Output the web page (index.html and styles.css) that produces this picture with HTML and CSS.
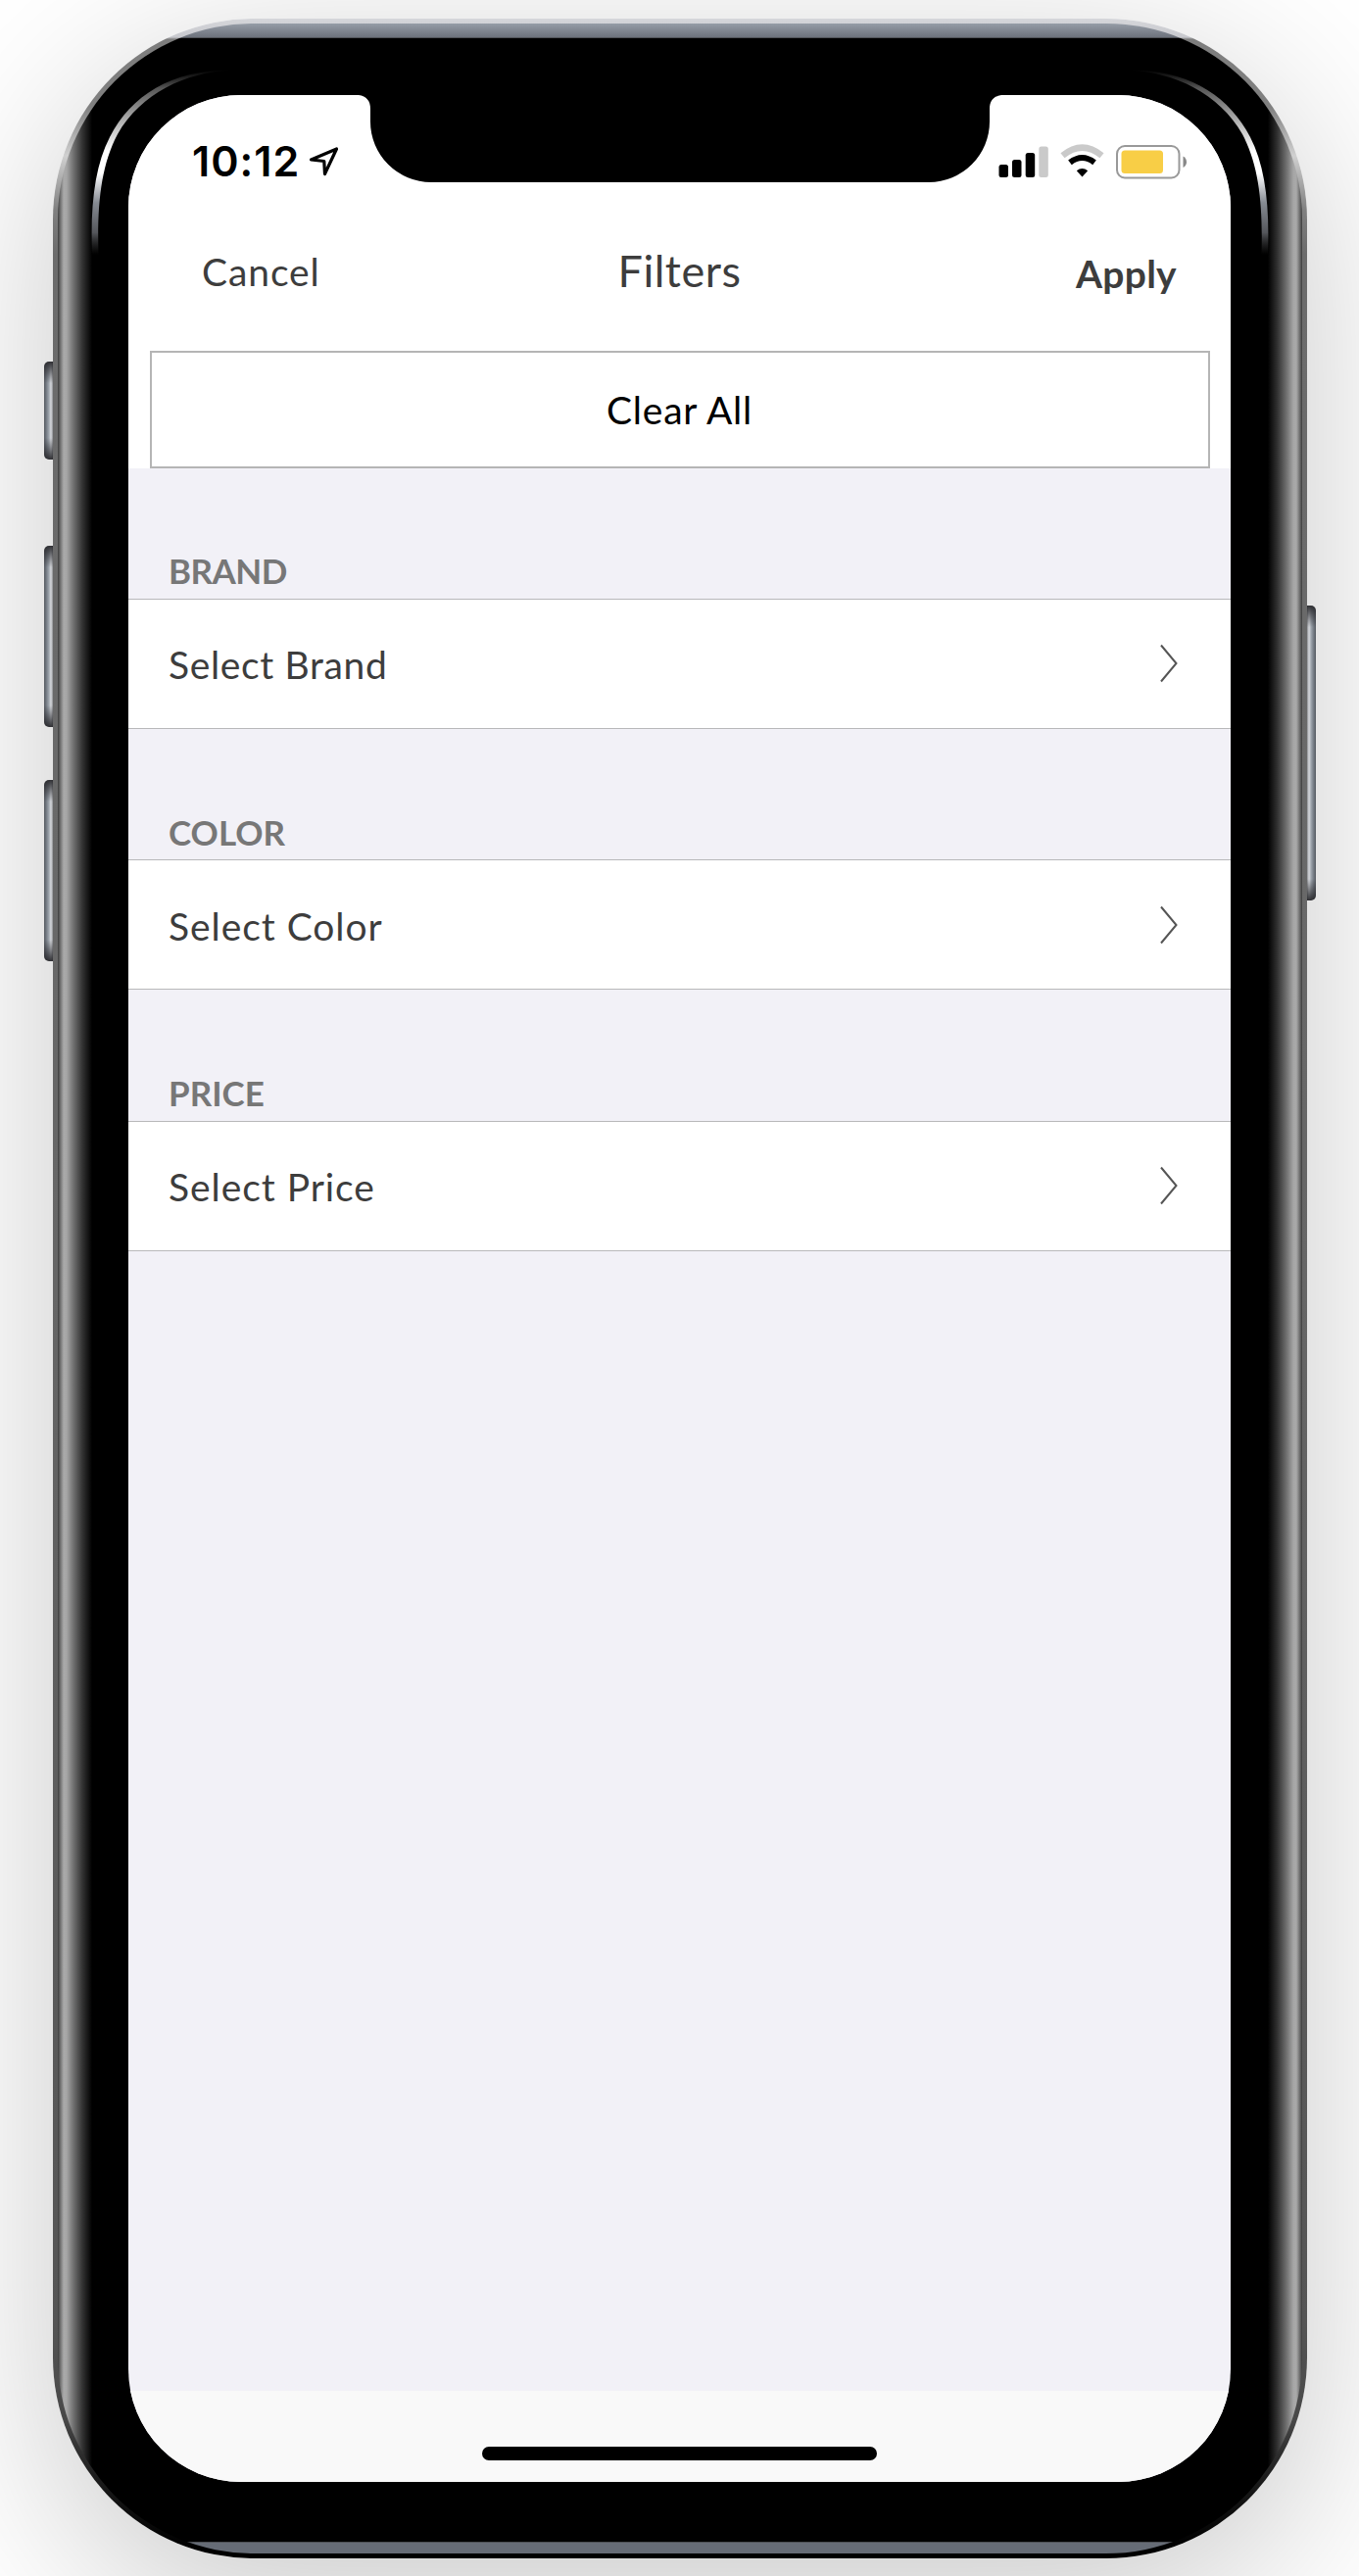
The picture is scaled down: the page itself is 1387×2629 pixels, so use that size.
FILE: index.html
```html
<!DOCTYPE html>
<html lang="en">
<head>
<meta charset="utf-8">
<title>Filters</title>
<link rel="stylesheet" href="styles.css">
</head>
<body>
<div class="phone">
  <span class="key key-left key-mute"></span>
  <span class="key key-left key-up"></span>
  <span class="key key-left key-down"></span>
  <span class="key key-right"></span>
  <div class="phone-body">
    <main class="screen">
      <header class="status">
        <span class="clock">10:12</span>
        <svg class="location" width="32" height="32" viewBox="0 0 32 32"><path d="M2.5 14 28.500 3 16.500 28.500 15.800 15.500Z" fill="none" stroke="#000" stroke-width="3.200" stroke-linejoin="round"/></svg>
        <svg class="indicators" width="196" height="38" viewBox="0 0 196 38">
          <rect x="2.500" y="22" width="9.500" height="13" rx="2.500"/>
          <rect x="16" y="17" width="9.500" height="18" rx="2.500"/>
          <rect x="29.700" y="10" width="9.500" height="25" rx="2.500"/>
          <rect x="43.300" y="3.500" width="9.500" height="31.500" rx="2.500" fill="#cacaca"/>
          <path d="M67.500 12.800Q87.500-3.500 107.500 12.800" fill="none" stroke="#cacaca" stroke-width="6.500"/>
          <path d="M75 19.800Q87.500 10.200 100 19.800" fill="none" stroke="#000" stroke-width="6"/>
          <path d="M81.800 28.200Q87.500 23.800 93.200 28.200L87.500 34.500Z"/>
          <rect x="123" y="3" width="63.500" height="32.500" rx="8" fill="none" stroke="#999" stroke-width="2"/>
          <rect x="127.500" y="7.500" width="42.500" height="23.500" rx="3.500" fill="#f8ce46"/>
          <path d="M190.500 13.500Q194 15.500 194 19.200T190.500 25Z" fill="#888"/>
        </svg>
      </header>
      <nav class="nav">
        <a class="cancel">Cancel</a>
        <h1 class="title">Filters</h1>
        <a class="apply">Apply</a>
      </nav>
      <div class="clear-wrap"><button class="clear"><span>Clear All</span></button></div>
      <section class="group">
        <h2 class="label label-tight">BRAND</h2>
        <div class="row row-tight"><span>Select Brand</span><svg class="chevron" width="18" height="40" viewBox="0 0 18 40"><path d="M1 1.500 16.500 20 1 38.500"/></svg></div>
      </section>
      <section class="group">
        <h2 class="label">COLOR</h2>
        <div class="row"><span>Select Color</span><svg class="chevron" width="18" height="40" viewBox="0 0 18 40"><path d="M1 1.500 16.500 20 1 38.500"/></svg></div>
      </section>
      <section class="group">
        <h2 class="label">PRICE</h2>
        <div class="row"><span>Select Price</span><svg class="chevron" width="18" height="40" viewBox="0 0 18 40"><path d="M1 1.500 16.500 20 1 38.500"/></svg></div>
      </section>
      <footer class="home"><span class="home-bar"></span></footer>
    </main>
  </div>
  <svg class="glass" width="1280" height="260" viewBox="0 0 1280 260">
    <defs>
      <linearGradient id="shine" gradientUnits="userSpaceOnUse" x1="0" y1="52" x2="0" y2="241">
        <stop offset="0" stop-color="#444" stop-opacity="0"/>
        <stop offset=".1" stop-color="#555"/>
        <stop offset=".3" stop-color="#bbb"/>
        <stop offset=".44" stop-color="#fff"/>
        <stop offset=".56" stop-color="#fff"/>
        <stop offset=".72" stop-color="#858a92"/>
        <stop offset=".88" stop-color="#55575c"/>
        <stop offset="1" stop-color="#333" stop-opacity="0"/>
      </linearGradient>
    </defs>
    <path fill="url(#shine)" d="M40 241C38 190 43 150 58 121C80 78 122 52 182 52.500C135 55 90 76 66 118C49 150 45 190 46.500 241Z"/>
    <path fill="url(#shine)" d="M1240 241C1242 190 1237 150 1222 121C1200 78 1158 52 1098 52.500C1145 55 1190 76 1214 118C1231 150 1235 190 1233.500 241Z"/>
    <path d="M312 78C320 79 324 84 324 92V105A62 62 0 0 0 386 167H894A62 62 0 0 0 956 105V92C956 84 960 79 968 78V70H312Z"/>
  </svg>
</div>
</body>
</html>
```
FILE: styles.css
```css
* { box-sizing: border-box; }

body {
  margin: 0;
  height: 2629px;
  padding: 19px 0 0 54px;
  overflow: hidden;
  background: #fff;
  font-family: Lato, "Liberation Sans", sans-serif;
}

.phone {
  position: relative;
  width: 1280px;
  height: 2592px;
  padding: 5px;
  border-radius: 205px;
  background: linear-gradient(#d5d6da 0, #c8c9ce 19px, #7d7d7d 21px, #808080 90px, #d0d0d0 140px, #808080 195px, #6c6c6c 240px, #666 1300px, #555 2350px, #484848 2450px, #1c1c1c 2510px, #000 2580px);
  box-shadow: 0 42px 180px rgba(0, 0, 0, .22);
}

.phone-body {
  height: 2582px;
  padding: 73px 72px;
  border-radius: 200px;
  background:
    linear-gradient(#969da7, #6d727c 14px, #333 15px) top / 100% 15px no-repeat,
    linear-gradient(#333, #666c76 1px) bottom / 100% 12px no-repeat,
    linear-gradient(90deg, #3c3c3c, #777 3px, #aaa 6px, #a6a6a6 9px, #777 15px, #333 25px, #000 35px, #000 1235px, #333 1245px, #777 1255px, #a6a6a6 1261px, #aaa 1264px, #777 1267px, #3c3c3c) #000;
}

.screen {
  display: flex;
  flex-direction: column;
  width: 1125px;
  height: 2436px;
  overflow: hidden;
  border-radius: 115px;
  background: #f2f1f7;
}

.status {
  display: flex;
  align-items: flex-start;
  height: 120px;
  padding: 42px 43px 0 65px;
  background: #fff;
}
.clock { width: 119px; font: 600 43px/50px Inter, sans-serif; letter-spacing: 1px; }
.location { margin: 10px 0 0 0; }
.indicators { margin: 7px 0 0 auto; }

.nav {
  display: grid;
  grid-template-columns: 1fr auto 1fr;
  height: 140px;
  padding: 28px 55px 0;
  background: #fff;
  color: #3d3d3d;
  font-size: 39px;
  line-height: 50px;
}
.cancel { padding: 7px 0 0 20px; letter-spacing: .9px; }
.title { margin: 5px 0 0; font-size: 45px; font-weight: 400; line-height: 52px; letter-spacing: .5px; }
.apply { padding-top: 9px; font-weight: 700; text-align: right; letter-spacing: .3px; }

.clear-wrap { height: 121px; padding: 1px 21.500px 0; background: #fff; }
.clear {
  width: 100%;
  height: 120px;
  border: 2.500px solid #b5b5b5;
  background: #fff;
  color: #000;
  font: 39px/50px Lato, sans-serif;
  letter-spacing: .8px;
}

.group { height: 266.500px; padding-top: 85px; }
.label {
  height: 47.500px;
  margin: 0;
  padding-left: 41px;
  color: #777;
  font-size: 35px;
  line-height: 38px;
}
.label-tight { letter-spacing: -.5px; }
.row {
  display: flex;
  align-items: center;
  justify-content: space-between;
  height: 133px;
  padding: 0 54px 0 41px;
  border: solid #b8b8ba;
  border-width: 1px 0;
  background: #fff;
  color: #3d3d3d;
  font-size: 39px;
  letter-spacing: .95px;
}
.row > span { padding-top: 2px; }
.row-tight { letter-spacing: .65px; }
.chevron { fill: none; stroke: #555; stroke-width: 2; }

.home { height: 93px; margin-top: auto; padding: 57px 0 0 361px; background: #f9f9f9; }
.home-bar { display: block; width: 403px; height: 14px; border-radius: 7px; background: #000; }

.glass { position: absolute; left: 0; top: 0; }

.key {
  position: absolute;
  width: 9px;
  background:
    linear-gradient(rgba(40, 40, 44, .95), rgba(60, 60, 64, 0) 22px, rgba(60, 60, 64, 0) calc(100% - 22px), rgba(40, 40, 44, .95)),
    linear-gradient(90deg, #555a61, #7f868f 3px, #a0a7af 5px, #d8dade 7px, #8a8c90);
}
.key-left { left: -9px; border-radius: 5px 0 0 5px; }
.key-right { left: 1280px; top: 599px; height: 301px; transform: scaleX(-1); border-radius: 5px 0 0 5px; }
.key-mute { top: 350px; height: 100px; }
.key-up { top: 538px; height: 185px; }
.key-down { top: 777px; height: 185px; }
```
